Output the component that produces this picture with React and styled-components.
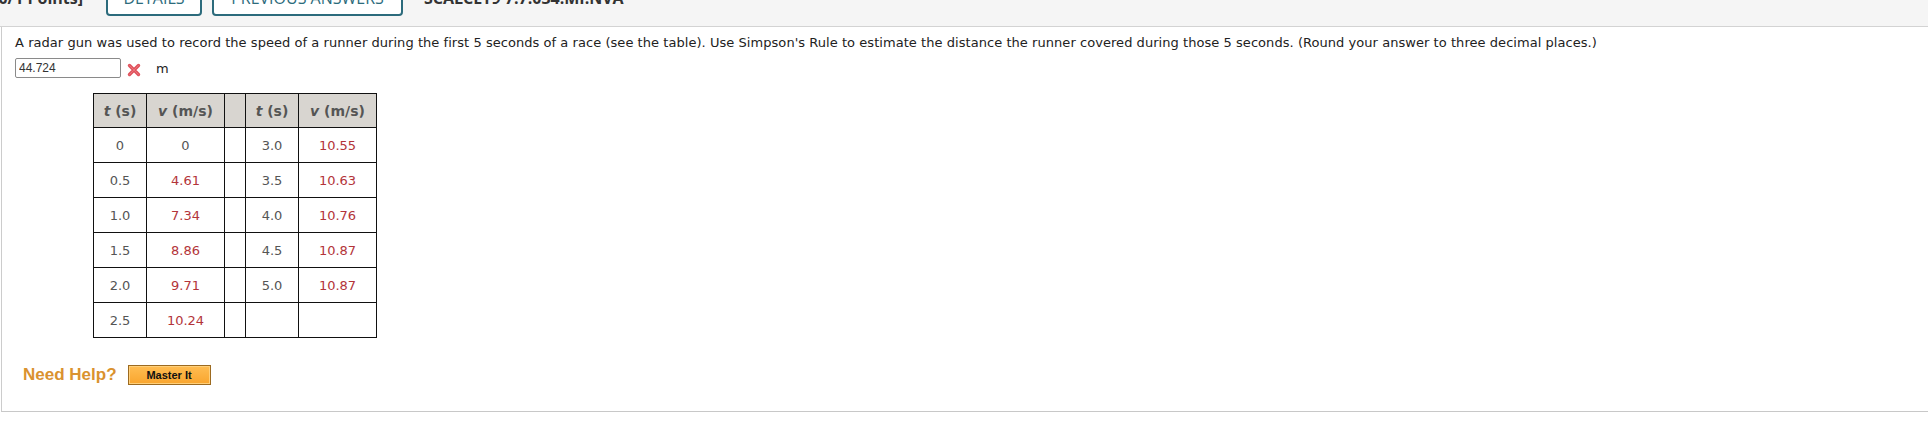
import React from "react";
import styled, { createGlobalStyle } from "styled-components";

const Global = createGlobalStyle`
  html, body { margin: 0; padding: 0; background: #ffffff; }
  body { font-family: "DejaVu Sans", Verdana, sans-serif; }
`;

const Page = styled.div`
  width: 1928px;
  min-height: 445px;
  background: #ffffff;
`;

const TopBar = styled.div`
  height: 26px;
  overflow: hidden;
  background: #f5f5f5;
  border-bottom: 1px solid #d3d3d3;
`;

const TopRow = styled.div`
  display: flex;
  align-items: center;
  margin-top: -20px;
  height: 36px;
`;

const Points = styled.div`
  width: 83px;
  display: flex;
  justify-content: flex-end;
  white-space: nowrap;
  font-family: "Open Sans", sans-serif;
  font-weight: 700;
  font-size: 16px;
  color: #333333;
  margin-right: 23px;
`;

const TabButton = styled.div`
  box-sizing: border-box;
  height: 36px;
  width: ${(p) => p.$w}px;
  margin-right: ${(p) => p.$mr}px;
  border: 2px solid #2c6b7c;
  border-radius: 4px;
  background: #ffffff;
  color: #2c6b7c;
  font-family: "Open Sans", sans-serif;
  font-size: 16px;
  text-transform: uppercase;
  display: flex;
  align-items: center;
  justify-content: center;
  white-space: nowrap;
`;

const Code = styled.div`
  font-family: "Open Sans", sans-serif;
  font-weight: 700;
  font-size: 16px;
  color: #333333;
  white-space: nowrap;
`;

const Card = styled.div`
  margin-left: 1px;
  border-left: 1px solid #cccccc;
  border-bottom: 1px solid #c8c8c8;
  background: #ffffff;
  padding: 8px 0 26px 13px;
`;

const Question = styled.p`
  margin: 0;
  font-size: 13px;
  line-height: 16px;
  letter-spacing: 0.05px;
  color: #222222;
  white-space: nowrap;
`;

const AnswerRow = styled.div`
  display: flex;
  align-items: center;
  margin-top: 7px;
  height: 20px;
`;

const AnswerInput = styled.input`
  box-sizing: border-box;
  width: 106px;
  height: 20px;
  margin: 0;
  padding: 0 3px;
  border: 1px solid #8a8a8a;
  border-radius: 2px;
  font-family: "Liberation Sans", Arial, sans-serif;
  font-size: 12px;
  color: #333333;
  background: #ffffff;
  outline: none;
`;

const WrongIcon = styled.svg`
  width: 14px;
  height: 14px;
  margin-left: 6px;
  margin-top: 3px;
`;

const Unit = styled.span`
  margin-left: 15px;
  font-size: 13px;
  color: #222222;
`;

const DataTable = styled.table`
  margin: 15px 0 0 78px;
  border-collapse: collapse;
  table-layout: fixed;
  width: 283px;
`;

const HeadCell = styled.th`
  height: 33px;
  padding: 0;
  border: 1px solid #111111;
  background: #d8d5d0;
  color: #555555;
  font-size: 14px;
  font-weight: 700;
  text-align: center;
  white-space: nowrap;
  i { font-style: italic; }
`;

const Cell = styled.td`
  height: 34px;
  padding: 0;
  border: 1px solid #111111;
  text-align: center;
  font-size: 13px;
  color: ${(p) => (p.$red ? "#b3343a" : "#555555")};
`;

const HelpRow = styled.div`
  display: flex;
  align-items: center;
  margin: 27px 0 0 8px;
  height: 20px;
`;

const HelpLabel = styled.span`
  font-family: "Liberation Sans", Arial, sans-serif;
  font-weight: 700;
  font-size: 17px;
  color: #da922f;
  margin-right: 11px;
`;

const MasterButton = styled.button`
  box-sizing: border-box;
  width: 83px;
  height: 20px;
  padding: 0;
  border: 1px solid #9c6a20;
  box-shadow: inset 0 0 0 1px #ffcf7a;
  background: linear-gradient(#ffbd52, #f9a52e);
  font-family: "Liberation Sans", Arial, sans-serif;
  font-weight: 700;
  font-size: 11px;
  color: #111111;
  cursor: pointer;
`;

const left = [
  ["0", "0", false],
  ["0.5", "4.61", true],
  ["1.0", "7.34", true],
  ["1.5", "8.86", true],
  ["2.0", "9.71", true],
  ["2.5", "10.24", true],
];
const right = [
  ["3.0", "10.55"],
  ["3.5", "10.63"],
  ["4.0", "10.76"],
  ["4.5", "10.87"],
  ["5.0", "10.87"],
  ["", ""],
];

export default function App() {
  return (
    <Page>
      <Global />
      <TopBar>
        <TopRow>
          <Points>[0/1 Points]</Points>
          <TabButton $w={96} $mr={10}>Details</TabButton>
          <TabButton $w={191} $mr={21}>Previous Answers</TabButton>
          <Code>SCALCET9 7.7.034.MI.NVA</Code>
        </TopRow>
      </TopBar>
      <Card>
        <Question>
          A radar gun was used to record the speed of a runner during the first 5 seconds of a race (see the table). Use Simpson's Rule to estimate the distance the runner covered during those 5 seconds. (Round your answer to three decimal places.)
        </Question>
        <AnswerRow>
          <AnswerInput defaultValue="44.724" readOnly />
          <WrongIcon viewBox="0 0 14 14">
            <path d="M2.5 2.5 L11.5 11.5 M11.5 2.5 L2.5 11.5" stroke="#e0525c" strokeWidth="3.4" strokeLinecap="round" />
            <path d="M2.5 2.5 L11.5 11.5 M11.5 2.5 L2.5 11.5" stroke="#f28a90" strokeWidth="1" strokeLinecap="round" opacity="0.6" />
          </WrongIcon>
          <Unit>m</Unit>
        </AnswerRow>
        <DataTable>
          <colgroup>
            <col style={{ width: 53 }} />
            <col style={{ width: 78 }} />
            <col style={{ width: 21 }} />
            <col style={{ width: 53 }} />
            <col style={{ width: 78 }} />
          </colgroup>
          <thead>
            <tr>
              <HeadCell><i>t</i> (s)</HeadCell>
              <HeadCell><i>v</i> (m/s)</HeadCell>
              <HeadCell />
              <HeadCell><i>t</i> (s)</HeadCell>
              <HeadCell><i>v</i> (m/s)</HeadCell>
            </tr>
          </thead>
          <tbody>
            {left.map((row, i) => (
              <tr key={i}>
                <Cell>{row[0]}</Cell>
                <Cell $red={row[2]}>{row[1]}</Cell>
                <Cell />
                <Cell>{right[i][0]}</Cell>
                <Cell $red>{right[i][1]}</Cell>
              </tr>
            ))}
          </tbody>
        </DataTable>
        <HelpRow>
          <HelpLabel>Need Help?</HelpLabel>
          <MasterButton>Master It</MasterButton>
        </HelpRow>
      </Card>
    </Page>
  );
}
